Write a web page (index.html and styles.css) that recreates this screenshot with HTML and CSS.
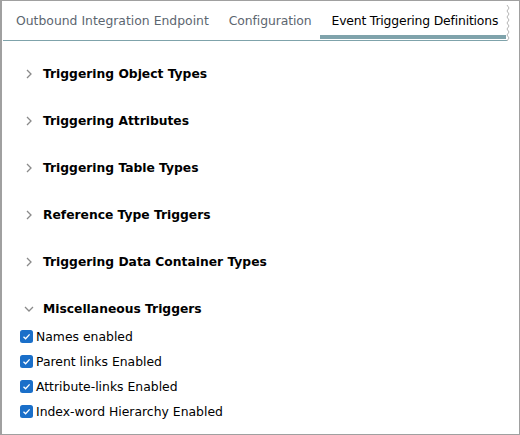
FILE: index.html
```html
<!DOCTYPE html>
<html>
<head>
<meta charset="utf-8">
<link rel="stylesheet" href="styles.css">
</head>
<body>
<div class="window">
  <div class="tabs">
    <div class="tab">Outbound Integration Endpoint</div>
    <div class="tab">Configuration</div>
    <div class="tab active">Event Triggering Definitions</div>
    <svg class="torn" width="4" height="36" viewBox="0 0 4 36"><path d="M1 0 L3 3 L1 6 L3 9 L1 12 L3 15 L1 18 L3 21 L1 24 L3 27 L1 30 L3 33 L1 36" fill="none" stroke="#b5b5b5" stroke-width="1"/></svg>
  </div>
  <div class="content">
    <div class="section"><svg class="chev" width="6" height="10" viewBox="0 0 6 10"><path d="M1 1 L5 5 L1 9" fill="none" stroke="#8a8a8a" stroke-width="1.3"/></svg><span>Triggering Object Types</span></div>
    <div class="section"><svg class="chev" width="6" height="10" viewBox="0 0 6 10"><path d="M1 1 L5 5 L1 9" fill="none" stroke="#8a8a8a" stroke-width="1.3"/></svg><span>Triggering Attributes</span></div>
    <div class="section"><svg class="chev" width="6" height="10" viewBox="0 0 6 10"><path d="M1 1 L5 5 L1 9" fill="none" stroke="#8a8a8a" stroke-width="1.3"/></svg><span>Triggering Table Types</span></div>
    <div class="section"><svg class="chev" width="6" height="10" viewBox="0 0 6 10"><path d="M1 1 L5 5 L1 9" fill="none" stroke="#8a8a8a" stroke-width="1.3"/></svg><span>Reference Type Triggers</span></div>
    <div class="section"><svg class="chev" width="6" height="10" viewBox="0 0 6 10"><path d="M1 1 L5 5 L1 9" fill="none" stroke="#8a8a8a" stroke-width="1.3"/></svg><span>Triggering Data Container Types</span></div>
    <div class="section open"><svg class="chev down" width="10" height="6" viewBox="0 0 10 6"><path d="M1 1 L5 5 L9 1" fill="none" stroke="#8a8a8a" stroke-width="1.3"/></svg><span>Miscellaneous Triggers</span></div>
    <div class="checks">
      <label class="check"><span class="box"><svg width="13" height="13" viewBox="0 0 13 13"><rect x="0" y="0" width="13" height="13" rx="2.5" fill="#1a6fc9"/><path d="M3.5 6.8 L5.6 8.8 L9.6 4.4" fill="none" stroke="#fff" stroke-width="1.3"/></svg></span>Names enabled</label>
      <label class="check"><span class="box"><svg width="13" height="13" viewBox="0 0 13 13"><rect x="0" y="0" width="13" height="13" rx="2.5" fill="#1a6fc9"/><path d="M3.5 6.8 L5.6 8.8 L9.6 4.4" fill="none" stroke="#fff" stroke-width="1.3"/></svg></span>Parent links Enabled</label>
      <label class="check"><span class="box"><svg width="13" height="13" viewBox="0 0 13 13"><rect x="0" y="0" width="13" height="13" rx="2.5" fill="#1a6fc9"/><path d="M3.5 6.8 L5.6 8.8 L9.6 4.4" fill="none" stroke="#fff" stroke-width="1.3"/></svg></span>Attribute-links Enabled</label>
      <label class="check"><span class="box"><svg width="13" height="13" viewBox="0 0 13 13"><rect x="0" y="0" width="13" height="13" rx="2.5" fill="#1a6fc9"/><path d="M3.5 6.8 L5.6 8.8 L9.6 4.4" fill="none" stroke="#fff" stroke-width="1.3"/></svg></span>Index-word Hierarchy Enabled</label>
    </div>
  </div>
</div>
</body>
</html>
```
FILE: styles.css
```css
html, body { margin: 0; padding: 0; background: #fff; }
body { font-family: "DejaVu Sans", sans-serif; font-size: 12.4px; color: #000; }
.window {
  width: 520px; height: 435px; box-sizing: border-box;
  border: 1px solid #a0a0a0; border-left-width: 2px;
  overflow: hidden;
}
.tabs {
  display: flex; align-items: stretch;
  margin: 0 12px 0 1px; height: 40px; box-sizing: border-box;
  border-bottom: 1px solid #7fa3ab;
  position: relative;
}
.tab {
  padding: 12px 8px 0 12px; color: #5c6670; white-space: nowrap;
}
.tab:first-child { padding-left: 13px; }
.tab:nth-child(2) { letter-spacing: -0.1px; }
.tab.active {
  color: #000; flex: 1; border-bottom: 4px solid #7fa3ab; margin-bottom: 1px;
  margin-right: 1px; letter-spacing: -0.18px;
}
.torn { position: absolute; right: -3px; top: 4px; }
.content { padding: 9px 0 0 0; }
.section {
  display: flex; align-items: center; height: 47px; padding-left: 24px;
  font-weight: bold; font-size: 12.3px;
}
.section .chev { margin-right: 11px; }
.section .chev.down { margin-left: -2px; margin-right: 9px; }
.section.open { height: 39px; box-sizing: border-box; padding-top: 8px; }
.checks { display: flex; flex-direction: column; padding-left: 18px; }
.check { display: flex; align-items: center; height: 25px; gap: 3px; }
.box { display: flex; width: 13px; height: 13px; }
```
